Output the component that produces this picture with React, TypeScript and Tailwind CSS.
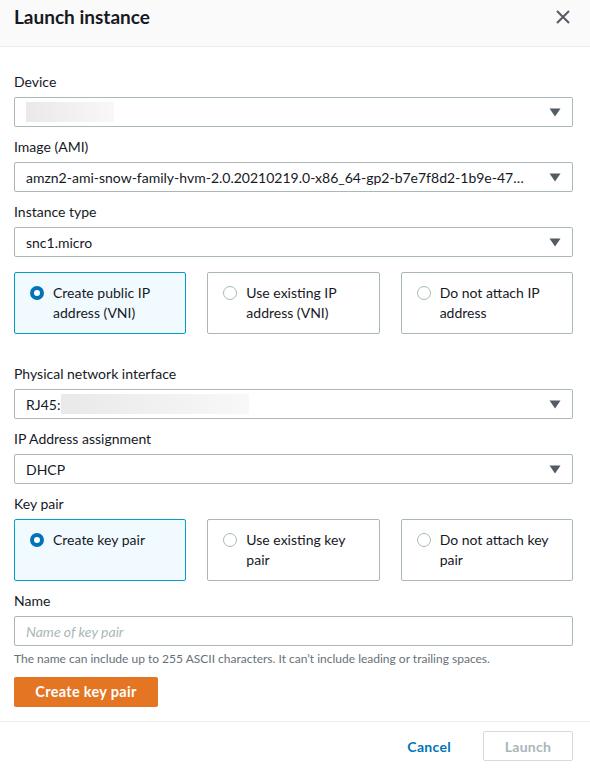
import React from "react";

const FONT = { fontFamily: '"Lato", "Noto Sans", sans-serif' };

function Caret() {
  return (
    <svg width="12" height="9" viewBox="0 0 12 9" className="shrink-0">
      <path d="M0.5 0.5 L11.5 0.5 L6 8.5 Z" fill="#545b64" />
    </svg>
  );
}

function Select({ children }: { children: React.ReactNode }) {
  return (
    <div className="flex h-[30px] items-center justify-between rounded-[2px] border border-[#aab7b8] bg-white pl-[11px] pr-[11px] text-[14px] text-[#16191f]">
      <div className="flex min-w-0 items-center truncate">{children}</div>
      <Caret />
    </div>
  );
}

function Label({ children }: { children: React.ReactNode }) {
  return <div className="mb-[5px] h-[20px] text-[14px] leading-[20px] text-[#16191f]">{children}</div>;
}

function Blur({ w }: { w: number }) {
  return <div className="h-[20px] bg-gradient-to-r from-[#e9e9e9] to-[#f8f8f8]" style={{ width: w }} />;
}

function Card({ label, selected }: { label: string; selected?: boolean }) {
  return (
    <div
      className={
        "flex h-[62px] gap-[9px] rounded-[2px] border pl-[15px] pr-[12px] pt-[10px] text-[14px] leading-[20px] text-[#16191f] " +
        (selected ? "border-[#00a1c9] bg-[#f1faff]" : "border-[#aab7b8] bg-white")
      }
    >
      <div className="flex h-[20px] shrink-0 items-center">
        {selected ? (
          <span className="block h-[14px] w-[14px] rounded-full border-[4px] border-[#0073bb] bg-white" />
        ) : (
          <span className="block h-[14px] w-[14px] rounded-full border border-[#aab7b8] bg-white" />
        )}
      </div>
      <div>{label}</div>
    </div>
  );
}

export default function App() {
  return (
    <div className="h-[768px] w-[590px] bg-white" style={FONT}>
      <div className="flex h-[47px] items-center justify-between border-b border-[#eaeded] bg-[#fafafa] pl-[14px] pr-[20px]">
        <h1 className="-mt-[12px] text-[19px] font-bold leading-[22px] text-[#16191f]">Launch instance</h1>
        <svg width="14" height="14" viewBox="0 0 14 14" className="-mt-[12px]">
          <path d="M1 1 L13 13 M13 1 L1 13" stroke="#545b64" strokeWidth="2" />
        </svg>
      </div>

      <div className="pl-[14px] pr-[17px] pt-[25px]">
        <Label>Device</Label>
        <Select>
          <Blur w={88} />
        </Select>

        <div className="mt-[10px]">
          <Label>Image (AMI)</Label>
          <Select>
            <span className="truncate">amzn2-ami-snow-family-hvm-2.0.20210219.0-x86_64-gp2-b7e7f8d2-1b9e-47…</span>
          </Select>
        </div>

        <div className="mt-[10px]">
          <Label>Instance type</Label>
          <Select>snc1.micro</Select>
        </div>

        <div className="mt-[15px] grid grid-cols-3 gap-[21px]">
          <Card label="Create public IP address (VNI)" selected />
          <Card label="Use existing IP address (VNI)" />
          <Card label="Do not attach IP address" />
        </div>

        <div className="mt-[30px]">
          <Label>Physical network interface</Label>
          <Select>
            <span>RJ45:</span>
            <span className="ml-[1px]">
              <Blur w={188} />
            </span>
          </Select>
        </div>

        <div className="mt-[10px]">
          <Label>IP Address assignment</Label>
          <Select>DHCP</Select>
        </div>

        <div className="mt-[10px]">
          <Label>Key pair</Label>
          <div className="grid grid-cols-3 gap-[21px]">
            <Card label="Create key pair" selected />
            <Card label="Use existing key pair" />
            <Card label="Do not attach key pair" />
          </div>
        </div>

        <div className="mt-[10px]">
          <Label>Name</Label>
          <div className="flex h-[30px] items-center rounded-[2px] border border-[#aab7b8] px-[11px] text-[14px] italic text-[#aab7b8]">
            Name of key pair
          </div>
          <div className="mt-[5px] text-[12px] leading-[16px] text-[#687078]">
            The name can include up to 255 ASCII characters. It can’t include leading or trailing spaces.
          </div>
        </div>

        <button className="mt-[10px] h-[30px] w-[144px] rounded-[2px] bg-[#e47522] text-[14.5px] font-bold tracking-[0.3px] text-white">
          Create key pair
        </button>
      </div>

      <div className="mt-[14px] border-t border-[#eaeded]" />

      <div className="flex items-center justify-end gap-[32px] px-[17px] pt-[9px]">
        <span className="text-[14px] font-bold tracking-[0.3px] text-[#0073bb]">Cancel</span>
        <button className="h-[30px] w-[90px] rounded-[2px] border border-[#d5dbdb] text-[14px] font-bold tracking-[0.3px] text-[#aab7b8]">
          Launch
        </button>
      </div>
    </div>
  );
}
